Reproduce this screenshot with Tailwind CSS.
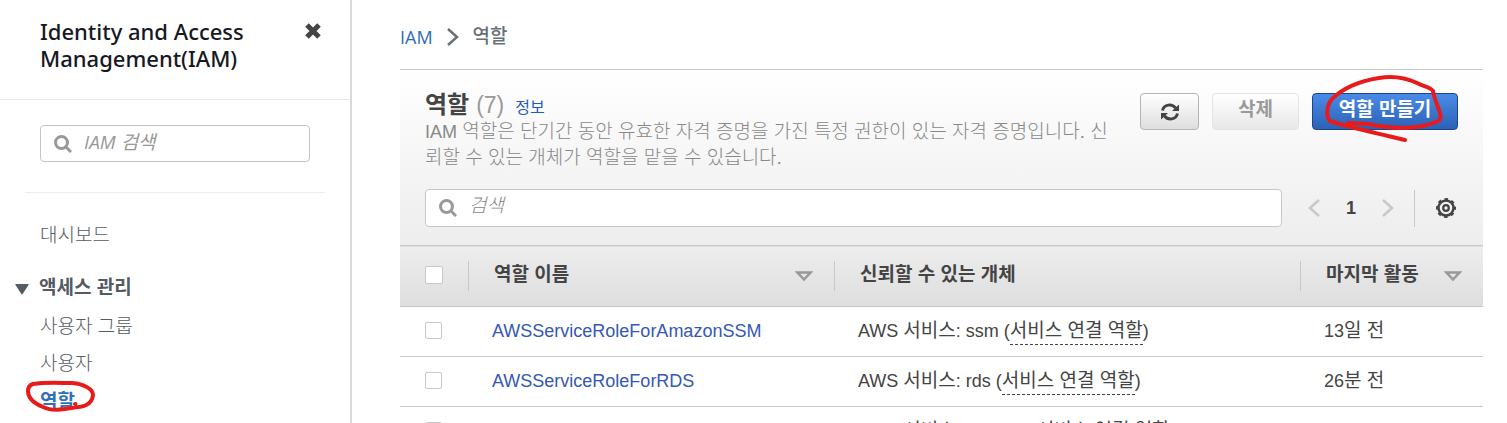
<!DOCTYPE html>
<html lang="ko">
<head>
<meta charset="utf-8">
<title>IAM 역할</title>
<script src="https://cdn.jsdelivr.net/npm/@tailwindcss/browser@4"></script>
</head>
<body class="bg-white font-['Liberation_Sans','Noto_Sans_CJK_KR',sans-serif] text-[18px] leading-6 text-[#444]">
<div class="flex h-screen overflow-hidden">
  <aside class="relative w-[352px] shrink-0 border-r-2 border-[#d5dbdb]">
    <header class="flex h-[100px] items-start justify-between border-b border-[#e6e8e8] pt-[18px] pr-[29px] pl-10">
      <h1 class="w-[230px] font-['Noto_Sans',sans-serif] text-[22px] leading-[27px] font-medium text-[#16191f]">Identity and Access Management(IAM)</h1>
      <button type="button" aria-label="닫기" class="mt-[5px]"><svg class="size-4" viewBox="0 0 16 16" stroke="#444" stroke-width="5"><path d="M2 2l12 12M14 2L2 14"/></svg></button>
    </header>
    <div class="mx-[25px] border-b border-[#eaeded] px-[15px] pt-[25px] pb-[30px]">
      <label class="flex h-[37px] items-center gap-3 rounded-[4px] border border-[#c4c4c4] px-[13px]">
        <svg class="size-[18px] shrink-0" viewBox="0 0 18 18" fill="none" stroke="#999" stroke-width="3"><circle cx="7.500" cy="7.500" r="6"/><path d="M12 12l5 5"/></svg>
        <input type="text" aria-label="IAM 검색" placeholder="IAM 검색" class="min-w-0 flex-1 pb-1 font-['Open_Sans','Noto_Sans_CJK_KR',sans-serif] text-[19px] italic outline-none placeholder:text-[#999]">
      </label>
    </div>
    <nav class="pt-[31px] text-[19px] leading-6 text-[#545b64]">
      <a href="#" class="block pl-10 font-light">대시보드</a>
      <button type="button" class="mt-7 flex items-center gap-[10px] pl-[15px] font-bold"><svg class="mt-0.5 h-3 w-[14px]" viewBox="0 0 14 12" fill="#545b64"><path d="M1 1h12a.6.6 0 01.5 1L7.600 11a.7.7 0 01-1.200 0L.5 2a.6.6 0 01.5-1z"/></svg>액세스 관리</button>
      <a href="#" class="mt-[15px] block pl-10 font-light">사용자 그룹</a>
      <a href="#" class="mt-[13px] block pl-10 font-light">사용자</a>
      <a href="#" class="mt-[14px] block pl-10 font-bold text-[#2e73b8]">역할</a>
    </nav>
    <svg class="pointer-events-none absolute top-[376px] left-[20px] h-10 w-20" viewBox="20 376 80 40" fill="none" stroke="#e81b1b" stroke-width="4" stroke-linecap="round" stroke-linejoin="round"><path d="M75 404h.5M33 384C45 382 60 383 72 383C84 384 93 389 93 395C92 406 82 407 71 408C62 410 51 411 43 407C33 403 28 397 28 391C28 387 30 385 33 384"/></svg>
  </aside>
  <main class="min-w-0 flex-1 pr-6 pl-12">
    <nav aria-label="탐색 경로" class="flex h-[69px] items-center gap-[14px] pt-1">
      <a href="#" class="font-['Open_Sans',sans-serif] text-[18px] text-[#2e6cb8]">IAM</a>
      <svg class="h-[18px] w-3" viewBox="0 0 12 18" fill="none" stroke="#687078" stroke-width="2.500"><path d="M1 1l9 8-9 8"/></svg>
      <span class="text-[19px] font-medium text-[#687078]">역할</span>
    </nav>
    <section class="border-t border-[#c8c8c8] bg-linear-to-b from-white to-[#ededed] px-[25px] pt-[23px] pb-[18px]">
      <div class="flex items-start justify-between">
        <div class="w-[685px]">
          <div class="flex h-6 items-baseline gap-[7px]">
            <h2 class="text-[24px] leading-6 font-bold text-[#444]">역할</h2><span class="text-[23px] leading-6 text-[#999]">(7)</span><a href="#" class="ml-1 text-[16px] leading-6 text-[#1d5bbf]">정보</a>
          </div>
          <p class="mt-[2px] text-[19px] leading-[25px] font-light text-[#888]"><span class="text-[18px]">IAM</span> 역할은 단기간 동안 유효한 자격 증명을 가진 특정 권한이 있는 자격 증명입니다. 신<br>뢰할 수 있는 개체가 역할을 맡을 수 있습니다.</p>
        </div>
        <div class="relative flex gap-[13px] text-[19px] leading-6">
          <button type="button" aria-label="새로 고침" class="flex h-[37px] w-[59px] items-center justify-center rounded-[4px] border border-[#b4b4b4] bg-linear-to-b from-white to-[#dedede]"><svg class="size-[18px]" viewBox="0 0 18 18" fill="none" stroke="#444" stroke-width="3"><path d="M1.500 7.500C3 1 11 .5 14.500 5M16.500 10.500C15 17 7 17.500 3.500 13"/><path d="M18 1.500v6.500h-7zM0 16.500v-6.500h7z" fill="#444" stroke="none"/></svg></button>
          <button type="button" disabled class="h-[37px] w-[87px] rounded-[4px] border border-[#e4e4e4] bg-linear-to-b from-white to-[#e8e8e8] pb-1 font-bold text-[#999]">삭제</button>
          <button type="button" class="h-[37px] w-[146px] rounded-[4px] border border-[#1c4587] bg-linear-to-b from-[#4a8be8] to-[#2d62b5] pb-1 font-bold text-white">역할 만들기</button>
          <svg class="pointer-events-none absolute top-[-23px] right-[5px] h-[75px] w-[140px]" viewBox="1313 70 140 75" fill="none" stroke="#e81b1b" stroke-width="4" stroke-linecap="round" stroke-linejoin="round"><path d="M1348 123L1368 124C1396 130 1422 129 1438 121C1442 119 1441 115 1439 110C1436 102 1434 97 1433 91C1431 87 1425 87 1417 83C1404 77 1391 76 1379 78C1360 81 1343 88 1332 99C1326 106 1326 117 1330 121C1345 126 1367 131 1388 136L1405 140"/></svg>
        </div>
      </div>
      <div class="mt-[19px] flex items-center pr-0.5">
        <label class="flex h-[38px] min-w-0 flex-1 items-center gap-3 rounded-[4px] border border-[#c8c8c8] bg-white px-[13px]">
          <svg class="size-[18px] shrink-0" viewBox="0 0 18 18" fill="none" stroke="#999" stroke-width="3"><circle cx="7.500" cy="7.500" r="6"/><path d="M12 12l5 5"/></svg>
          <input type="text" aria-label="검색" placeholder="검색" class="min-w-0 flex-1 pb-1 text-[19px] font-light italic outline-none placeholder:text-[#888]">
        </label>
        <div class="ml-[26px] flex items-center text-[#444]">
          <button type="button" aria-label="이전 페이지"><svg class="h-[18px] w-3" viewBox="0 0 12 18" fill="none" stroke="#c8c8c8" stroke-width="2.500"><path d="M11 1L2 9l9 8"/></svg></button>
          <button type="button" class="w-[62px] font-bold">1</button>
          <button type="button" aria-label="다음 페이지"><svg class="h-[18px] w-3" viewBox="0 0 12 18" fill="none" stroke="#c8c8c8" stroke-width="2.500"><path d="M1 1l9 8-9 8"/></svg></button>
          <span class="ml-5 h-[37px] w-px bg-[#c8c8c8]"></span>
          <button type="button" aria-label="설정" class="ml-[21px]"><svg class="size-5" viewBox="0 0 20 20" fill="none" stroke="#444"><circle cx="10" cy="10" r="7.500" stroke-width="2.500"/><circle cx="10" cy="10" r="9" stroke-width="2" stroke-dasharray="3.500 3.570" stroke-dashoffset="1.750"/><circle cx="10" cy="10" r="2.800" stroke-width="2.200"/></svg></button>
        </div>
      </div>
    </section>
    <table class="w-full table-fixed border-collapse text-left">
      <colgroup><col class="w-[68px]"><col class="w-[366px]"><col class="w-[466px]"><col></colgroup>
      <thead>
        <tr class="h-[61px] border-y border-[#c8c8c8] bg-linear-to-b from-[#ededed] to-[#dedede] text-[19px]">
          <th class="p-0 pb-0.5 pl-[25px]"><input type="checkbox" aria-label="모두 선택" class="block size-[18px] appearance-none rounded-[2px] border border-[#c8c8c8] bg-white"></th>
          <th class="p-0"><div class="flex h-[30px] items-center justify-between border-l border-[#c8c8c8] pr-[21px] pb-0.5 pl-[25px] font-bold">역할 이름<svg class="mt-0.5 h-[11px] w-[18px]" viewBox="0 0 18 11" fill="none" stroke="#999" stroke-width="2.500"><path d="M2.500 1.500h13L9 8.500z"/></svg></div></th>
          <th class="p-0"><div class="flex h-[30px] items-center border-l border-[#c8c8c8] pb-0.5 pl-[25px] font-bold">신뢰할 수 있는 개체</div></th>
          <th class="p-0"><div class="flex h-[30px] items-center justify-between border-l border-[#c8c8c8] pr-[21px] pb-0.5 pl-[25px] font-bold">마지막 활동<svg class="mt-0.5 h-[11px] w-[18px]" viewBox="0 0 18 11" fill="none" stroke="#999" stroke-width="2.500"><path d="M2.500 1.500h13L9 8.500z"/></svg></div></th>
        </tr>
      </thead>
      <tbody>
        <tr class="h-[50px] border-b border-[#c8c8c8]">
          <td class="p-0 pb-0.5 pl-[25px]"><input type="checkbox" aria-label="AWSServiceRoleForAmazonSSM 선택" class="block size-[17px] appearance-none rounded-[2px] border border-[#c8c8c8]"></td>
          <td class="p-0 pb-0.5 pl-6"><a href="#" class="text-[#3558b5]">AWSServiceRoleForAmazonSSM</a></td>
          <td class="p-0 pb-0.5 pl-6">AWS <span class="text-[19px]">서비스</span>: ssm (<span class="border-b border-dashed border-[#444] pb-[3px] text-[19px]">서비스 연결 역할</span>)</td>
          <td class="p-0 pb-0.5 pl-6">13<span class="text-[19px]">일 전</span></td>
        </tr>
        <tr class="h-[50px] border-b border-[#c8c8c8]">
          <td class="p-0 pb-0.5 pl-[25px]"><input type="checkbox" aria-label="AWSServiceRoleForRDS 선택" class="block size-[17px] appearance-none rounded-[2px] border border-[#c8c8c8]"></td>
          <td class="p-0 pb-0.5 pl-6"><a href="#" class="text-[#3558b5]">AWSServiceRoleForRDS</a></td>
          <td class="p-0 pb-0.5 pl-6">AWS <span class="text-[19px]">서비스</span>: rds (<span class="border-b border-dashed border-[#444] pb-[3px] text-[19px]">서비스 연결 역할</span>)</td>
          <td class="p-0 pb-0.5 pl-6">26<span class="text-[19px]">분 전</span></td>
        </tr>
        <tr class="h-[50px] border-b border-[#c8c8c8]">
          <td class="p-0 pb-0.5 pl-[25px]"><input type="checkbox" aria-label="AWSServiceRoleForSupport 선택" class="block size-[17px] appearance-none rounded-[2px] border border-[#c8c8c8]"></td>
          <td class="p-0 pb-0.5 pl-6"><a href="#" class="text-[#3558b5]">AWSServiceRoleForSupport</a></td>
          <td class="p-0 pb-0.5 pl-6">AWS <span class="text-[19px]">서비스</span>: support (<span class="border-b border-dashed border-[#444] pb-[3px] text-[19px]">서비스 연결 역할</span>)</td>
          <td class="p-0 pb-0.5 pl-6">-</td>
        </tr>
      </tbody>
    </table>
  </main>
</div>
</body>
</html>
